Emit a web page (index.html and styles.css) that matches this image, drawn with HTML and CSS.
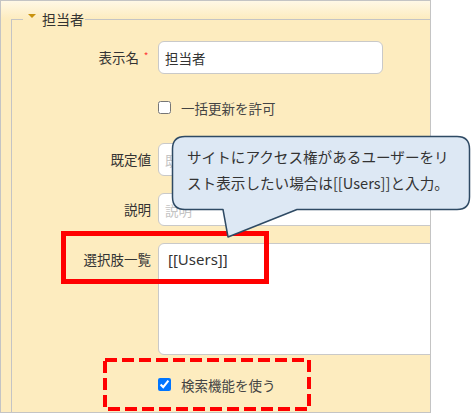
FILE: index.html
```html
<!DOCTYPE html>
<html lang="ja">
<head>
  <meta charset="UTF-8" />
  <title>担当者</title>
  <link rel="stylesheet" href="styles.css">
</head>
<body>
  <div class="page">
    <div class="panel">
      <fieldset class="group">
        <legend><span class="caret"></span>担当者</legend>
        <div class="rows">
          <div class="row">
            <label class="lbl">表示名<span class="req">*</span></label>
            <input class="text short" type="text" value="担当者">
          </div>
          <div class="row check-row">
            <span></span>
            <label class="check"><input type="checkbox"><span>一括更新を許可</span></label>
          </div>
          <div class="row">
            <label class="lbl">既定値</label>
            <input class="text wide" type="text" placeholder="既定値">
          </div>
          <div class="row">
            <label class="lbl">説明</label>
            <input class="text wide" type="text" placeholder="説明">
          </div>
          <div class="row">
            <label class="lbl">選択肢一覧</label>
            <textarea class="area">[[Users]]</textarea>
          </div>
          <div class="row check-row last">
            <span></span>
            <label class="check"><input type="checkbox" checked><span>検索機能を使う</span></label>
          </div>
        </div>
      </fieldset>
    </div>

    <!-- annotations -->
    <div class="mark-solid"></div>
    <svg class="mark-dashed" width="208" height="53" viewBox="0 0 208 53">
      <rect x="2" y="2" width="204" height="49" fill="none" stroke="#ff0000" stroke-width="4" stroke-dasharray="12 5"/>
    </svg>
    <div class="callout">
      <svg class="callout-shape" width="301" height="106" viewBox="0 0 301 106">
        <path d="M15 2.5 H287 Q299.5 2.5 299.5 15 V63 Q299.5 75.5 287 75.5 H127 L58 103 L53 75.5 H15 Q2.5 75.5 2.5 63 V15 Q2.5 2.5 15 2.5 Z" fill="#dde8f4" stroke="#2e4a64" stroke-width="1.5" stroke-linejoin="round"/>
      </svg>
      <p>サイトにアクセス権があるユーザーをリ<br>スト表示したい場合は[[Users]]と入力。</p>
    </div>
  </div>
</body>
</html>
```

FILE: styles.css
```css
body {
  margin: 0;
  background: #ffffff;
  font-family: "Noto Sans CJK JP", sans-serif;
  color: #333;
}
.page {
  position: relative;
  width: 471px;
  height: 413px;
  overflow: hidden;
}
.panel {
  box-sizing: border-box;
  width: 431px;
  height: 413px;
  border: 1px solid #c4c4c4;
  background: linear-gradient(to bottom, #fff8e6 0, #fdecbf 18px, #fdecbf 100%);
  overflow: hidden;
}
.group {
  width: 480px;
  margin: 8px 0 0 10px;
  padding: 0;
  border: 1px solid #c4c4c4;
  border-bottom: none;
  min-height: 420px;
}
.group legend {
  margin-left: 11px;
  padding: 0 1px 0 5px;
  font-size: 14px;
  line-height: 20px;
  display: flex;
  align-items: center;
  gap: 6px;
}
.caret {
  width: 0;
  height: 0;
  border-left: 4px solid transparent;
  border-right: 4px solid transparent;
  border-top: 4px solid #c8920e;
  margin-top: -7px;
}
.rows {
  display: flex;
  flex-direction: column;
  gap: 17px;
  margin-top: 12px;
}
.row {
  display: grid;
  grid-template-columns: 139px 1fr;
  column-gap: 7px;
  align-items: start;
}
.lbl {
  text-align: right;
  font-size: 13.5px;
  line-height: 33px;
  white-space: nowrap;
}
.req {
  display: inline-block;
  width: 10px;
  padding-left: 2px;
  color: #ff3b3b;
  font-size: 10px;
  line-height: 10px;
  vertical-align: 3px;
  text-align: center;
}
.text {
  box-sizing: border-box;
  height: 33px;
  margin: 0;
  padding: 0 6px;
  border: 1px solid #c9c9c9;
  border-radius: 6px;
  background: #fff;
  font-family: "Noto Sans CJK JP", sans-serif;
  font-size: 13.5px;
  color: #333;
  outline: none;
}
.text::placeholder {
  color: #c4c4c4;
}
.short {
  width: 225px;
}
.wide {
  width: 320px;
}
.area {
  box-sizing: border-box;
  width: 320px;
  height: 112px;
  margin: 0;
  padding: 4px 9px;
  border: 1px solid #c9c9c9;
  border-radius: 6px;
  background: #fff;
  font-family: "Noto Sans", "Noto Sans CJK JP", sans-serif;
  font-size: 15px;
  line-height: 22px;
  color: #333;
  resize: none;
  outline: none;
}
.check-row {
  height: 35px;
  padding-bottom: 2px;
  box-sizing: border-box;
  align-items: center;
}
.check-row.last {
  height: 25px;
  padding-bottom: 0;
}
.check {
  display: flex;
  align-items: center;
  gap: 10px;
  font-size: 13.5px;
  color: #444;
}
.check input {
  width: 13px;
  height: 13px;
  margin: 0;
}
.mark-solid {
  position: absolute;
  left: 61px;
  top: 231px;
  width: 208px;
  height: 53px;
  box-sizing: border-box;
  border: 5px solid #ff0000;
}
.mark-dashed {
  position: absolute;
  left: 103px;
  top: 358px;
}
.callout {
  position: absolute;
  left: 170px;
  top: 134px;
  width: 301px;
  height: 106px;
}
.callout-shape {
  position: absolute;
  left: 0;
  top: 0;
}
.callout p {
  position: relative;
  margin: 0;
  padding: 10px 0 0 17px;
  font-size: 14.6px;
  line-height: 26px;
  color: #333;
  white-space: nowrap;
}
```
